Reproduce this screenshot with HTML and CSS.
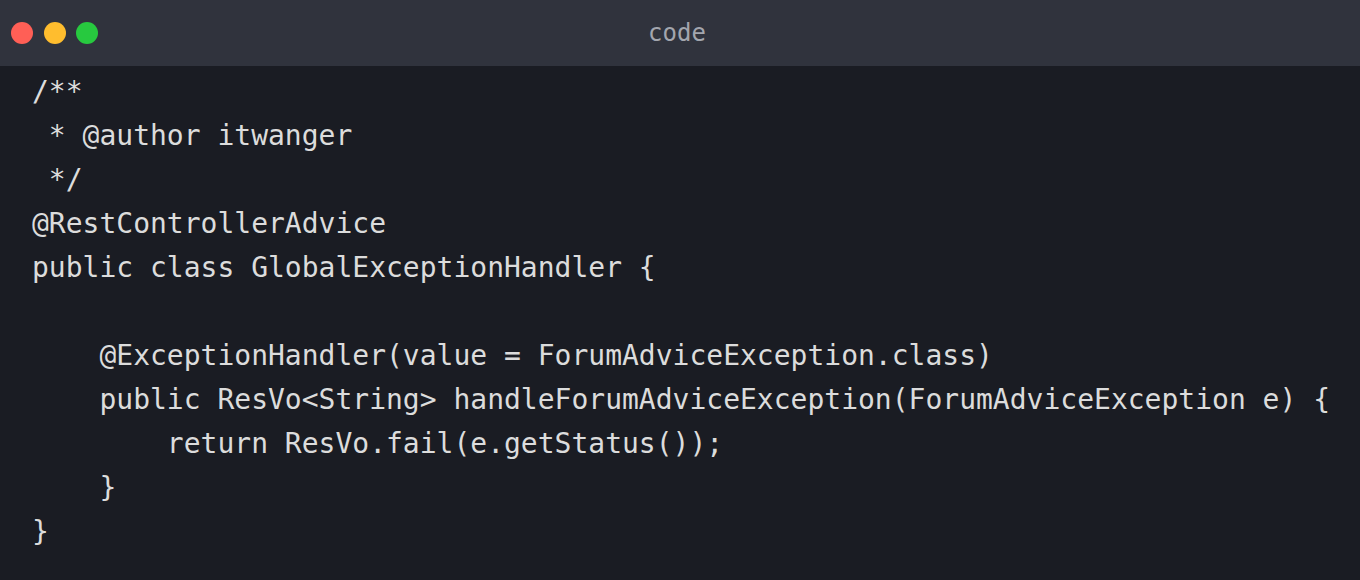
FILE: index.html
```html
<!DOCTYPE html>
<html>
<head>
<meta charset="utf-8">
<link rel="stylesheet" href="styles.css">
</head>
<body>
<div class="window">
  <div class="titlebar">
    <div class="lights">
      <span class="light red"></span>
      <span class="light yellow"></span>
      <span class="light green"></span>
    </div>
    <div class="title">code</div>
  </div>
<pre class="code">/**
 * @author itwanger
 */
@RestControllerAdvice
public class GlobalExceptionHandler {

    @ExceptionHandler(value = ForumAdviceException.class)
    public ResVo&lt;String&gt; handleForumAdviceException(ForumAdviceException e) {
        return ResVo.fail(e.getStatus());
    }
}</pre>
</div>
</body>
</html>
```
FILE: styles.css
```css
html, body {
  margin: 0;
  padding: 0;
  background: #1a1c23;
}
.window {
  width: 1360px;
  height: 580px;
  overflow: hidden;
  background: #1a1c23;
}
.titlebar {
  position: relative;
  height: 66px;
  background: #30333d;
  display: flex;
  align-items: center;
  justify-content: center;
  padding-right: 6px;
}
.lights {
  position: absolute;
  left: 11px;
  top: 22px;
  display: flex;
  gap: 10.5px;
}
.light {
  width: 22px;
  height: 22px;
  border-radius: 50%;
  display: block;
}
.red { background: #ff5f56; }
.yellow { background: #ffbd2e; }
.green { background: #27c93f; }
.title {
  font-family: "DejaVu Sans Mono", monospace;
  font-size: 24px;
  color: #a3a6ae;
}
.code {
  margin: 0;
  padding: 4px 32px;
  font-family: "DejaVu Sans Mono", monospace;
  font-size: 28px;
  line-height: 44px;
  color: #dcdcdc;
}
```
